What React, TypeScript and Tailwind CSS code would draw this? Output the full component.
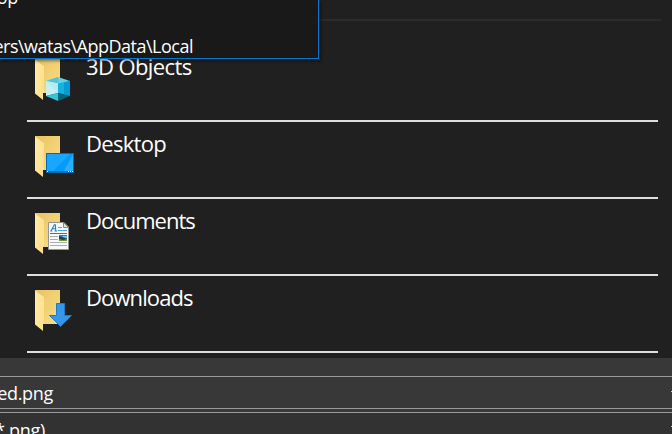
import type { ReactNode } from "react";

const FONT = "font-['Open_Sans','Noto_Sans',sans-serif]";

function Folder({ children }: { children: ReactNode }) {
  return (
    <svg width="42" height="46" viewBox="0 0 42 46" className="block shrink-0">
      <defs>
        <linearGradient id="back" x1="0" y1="0" x2="1" y2="1">
          <stop offset="0" stopColor="#e9c263" />
          <stop offset="1" stopColor="#fbdf86" />
        </linearGradient>
        <linearGradient id="front" x1="0" y1="0" x2="1" y2="0.6">
          <stop offset="0" stopColor="#ffeaa9" />
          <stop offset="1" stopColor="#ffe18c" />
        </linearGradient>
      </defs>
      <path d="M0 0H25V34H8L0 28Z" fill="url(#back)" />
      <path d="M0 .4L9 7.2V33.7H8V41L0 34.6Z" fill="url(#front)" />
      {children}
    </svg>
  );
}

function Cube() {
  return (
    <g>
      <path d="M23 18L35 22L23 26.5L11 22Z" fill="#65d1df" />
      <path d="M11 22L23 18V26.5Z" fill="#55c5d6" />
      <path d="M11 22L23 24.5V34L11 37Z" fill="#c4f0f3" />
      <path d="M11 22L23 24.5V34Z" fill="#b4eaf0" />
      <path d="M11 37L23 34V42Z" fill="#35c5d8" />
      <path d="M23 24.5L35 22V37L23 34Z" fill="#14b2df" />
      <path d="M35 22V37L29 35.5V23.3Z" fill="#069bd8" />
      <path d="M23 34L35 37L23 42Z" fill="#04677c" />
    </g>
  );
}

function Screen() {
  return (
    <g>
      <rect x="11" y="17" width="28" height="20" fill="#0769b0" />
      <rect x="12" y="18" width="26" height="17" fill="#009cfb" />
      <path d="M12 18H35L18 35H12Z" fill="#1aa5ff" />
      <path d="M38 18V35H29Z" fill="#2badff" />
      <path d="M12 35h1v1h-1zM33 35h1v1h-1zM35 35h1v1h-1zM37 35h1v1h-1z" fill="#fff" />
    </g>
  );
}

function Page() {
  return (
    <g>
      <path d="M13.5 9.5H29L33.5 14V36.5H13.5Z" fill="#f8f8f8" stroke="#949494" />
      <path d="M28.5 9.5V14.5H33.5Z" fill="#e1e1e1" stroke="#888" />
      <path
        d="M16 18L19.3 11.7H20.3L20.8 18M17.4 15.7H20.6M15.2 18H17.2M19.6 18H22"
        fill="none"
        stroke="#1684cd"
        strokeWidth="1.1"
      />
      <path d="M23 14.5H27M23 17.5H32" stroke="#42a5e8" />
      <path d="M15 20.5H32" stroke="#1682c9" />
      <path d="M15 23.5H23M15 26.5H23M15 29.5H32M15 32.5H32" stroke="#adadad" />
      <rect x="24" y="22" width="8" height="6" fill="#287fb3" />
      <path d="M24 23L28 24.5L32 26V28H24Z" fill="#1d4350" />
      <path d="M24 26L28 27L32 26V28H24Z" fill="#6f963f" />
      <path d="M27 23H32V25L28 24Z" fill="#8fc3e8" />
    </g>
  );
}

function DownArrow() {
  return (
    <path
      d="M21.5 13.5H29.5V25.5H36.5L25.5 36.4L14.5 25.5H21.5Z"
      fill="#3697e9"
      stroke="#2478c0"
    />
  );
}

const places: { name: string; tracking: string; icon: ReactNode }[] = [
  { name: "3D Objects", tracking: "tracking-[-0.6px]", icon: <Cube /> },
  { name: "Desktop", tracking: "tracking-[-0.7px]", icon: <Screen /> },
  { name: "Documents", tracking: "tracking-[-1px]", icon: <Page /> },
  { name: "Downloads", tracking: "tracking-[-0.9px]", icon: <DownArrow /> },
];

export default function App() {
  return (
    <div className={`relative flex h-[434px] w-[672px] flex-col overflow-hidden bg-[#202020] text-white ${FONT}`}>
      <div className="h-[45px] shrink-0 pt-[19px]">
        <div className="mr-[11px] h-[2px] bg-[#2b2b2b]" />
      </div>
      <div className="h-[313px] shrink-0 pr-[14px] pl-[27px]">
        {places.map((p) => (
          <div key={p.name} className="flex h-[77px] border-b-2 border-[#dedede] pt-[14px] pl-2">
            <Folder>{p.icon}</Folder>
            <span className={`-mt-[8px] ml-[9px] text-[22px] leading-[30px] whitespace-nowrap ${p.tracking}`}>
              {p.name}
            </span>
          </div>
        ))}
      </div>
      <div className="flex h-[76px] shrink-0 flex-col overflow-hidden bg-[#383838] pt-[18px] text-[18px]">
        <div className="flex h-[33px] shrink-0 items-center justify-between border-y border-[#9b9b9b]">
          <div className="flex w-[53px] shrink-0 justify-end leading-[24px] tracking-[-0.3px] whitespace-nowrap">
            ed.png
          </div>
          <div className="mb-[3px] h-px w-px bg-[#d0d0d0]" />
        </div>
        <div className="mt-[3px] flex h-[33px] shrink-0 items-start justify-between border-t border-[#9b9b9b] bg-[#323232]">
          <div className="mt-[5px] flex w-[45px] shrink-0 justify-end leading-[24px] tracking-[-0.3px] whitespace-nowrap">
            *.png)
          </div>
          <div className="mt-[13px] h-px w-px bg-[#d0d0d0]" />
        </div>
      </div>
      <div className="absolute top-0 left-0 flex h-[59px] w-[319px] flex-col overflow-hidden border-r border-b border-[#0078d7] bg-[#191919] text-[18px] leading-[24px] shadow-[2px_2px_3px_rgba(0,0,0,0.45)]">
        <div className="-mt-[15px] flex w-[18px] shrink-0 justify-end tracking-[-0.3px] whitespace-nowrap">op</div>
        <div className="mt-[25px] flex w-[193px] shrink-0 justify-end tracking-[-0.5px] whitespace-nowrap">
          {"Users\\watas\\AppData\\Local"}
        </div>
      </div>
    </div>
  );
}
